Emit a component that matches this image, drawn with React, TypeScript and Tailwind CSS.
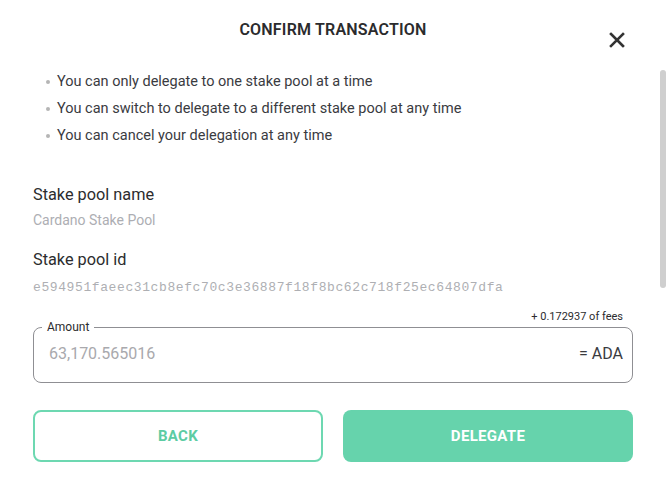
const bullets = [
  "You can only delegate to one stake pool at a time",
  "You can switch to delegate to a different stake pool at any time",
  "You can cancel your delegation at any time",
]

export default function App() {
  return (
    <div className="relative w-[666px] h-[496px] overflow-hidden bg-white font-['Roboto',sans-serif] text-[#2c2c2e]">
      <div className="pt-[20px] text-center text-[16px] leading-[20px] font-semibold tracking-[0.2px] text-[#2b2b2d]">
        CONFIRM TRANSACTION
      </div>

      {/* close button */}
      <button className="absolute left-[609px] top-[32px] w-[16px] h-[16px] flex items-center justify-center">
        <svg width="16" height="16" viewBox="0 0 16 16">
          <path d="M2 2 L14 14 M14 2 L2 14" stroke="#333" strokeWidth="2.6" strokeLinecap="square" />
        </svg>
      </button>

      {/* scrollbar thumb */}
      <div className="absolute left-[660px] top-[70px] w-[6px] h-[218px] rounded-full bg-[#cfcfcf]" />

      <div className="px-[33px]">
        <ul className="mt-[28px]">
          {bullets.map((b, i) => (
            <li key={i} className="flex items-center h-[27px] text-[14.5px] text-[#3a3b3f]">
              <span className="ml-[13px] mr-[7px] w-[4px] h-[4px] rounded-full bg-[#b5b5b5]" />
              {b}
            </li>
          ))}
        </ul>

        <div className="mt-[34px] text-[16.3px] leading-[24px] text-[#2c2c2e]">Stake pool name</div>
        <div className="mt-[3px] text-[14px] leading-[20px] text-[#adaeb3]">Cardano Stake Pool</div>

        <div className="mt-[18px] text-[16.3px] leading-[24px] text-[#2c2c2e]">Stake pool id</div>
        <div className="mt-[6px] text-[13px] leading-[20px] tracking-[0.6px] text-[#aeafb3] font-['Liberation_Mono',monospace]">
          e594951faeec31cb8efc70c3e36887f18f8bc62c718f25ec64807dfa
        </div>

        <div className="mt-[12px] h-[14px] text-right pr-[10px] text-[11px] leading-[14px] text-[#2c2c2e]">
          + 0.172937 of fees
        </div>

        <fieldset className="mt-[-5px] border border-[#8f8f93] rounded-[8px] p-0 m-0">
          <legend className="ml-[8px] px-[5px] text-[12px] leading-[16px] text-[#2c2c2e]">Amount</legend>
          <div className="flex items-center justify-between h-[38px] pl-[15px] pr-[9px] mb-[9px] text-[16px]">
            <span className="text-[#a9a9ad]">63,170.565016</span>
            <span className="text-[#3a3b3f]">= ADA</span>
          </div>
        </fieldset>

        <div className="mt-[27px] flex gap-[20px]">
          <button className="w-[290px] h-[52px] rounded-[8px] border-2 border-[#6dd8b1] bg-white text-[15px] font-bold tracking-[0.3px] text-[#5ccca3]">
            BACK
          </button>
          <button className="w-[290px] h-[52px] rounded-[8px] bg-[#66d3ac] text-[15px] font-bold tracking-[0.3px] text-white">
            DELEGATE
          </button>
        </div>
      </div>
    </div>
  )
}
